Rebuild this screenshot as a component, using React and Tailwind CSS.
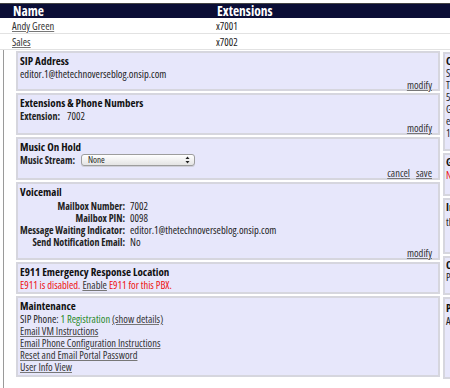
function Card({ h, children, right }) {
  return (
    <div
      className={`flex flex-col border-2 border-[#d6d6de] bg-[#e7e7fb] ${right ? 'pl-[1px] pr-[2px]' : 'px-[2px] pt-[1px]'} ${h}`}
    >
      {children}
    </div>
  );
}

function Title({ children }) {
  return <div className="text-[11px] font-bold leading-[13px] text-[#111]">{children}</div>;
}

function Link({ children }) {
  return <span className="cursor-pointer text-[#333] underline decoration-[#777] underline-offset-[1px]">{children}</span>;
}

function Bottom({ children }) {
  return <div className="mt-auto flex justify-end gap-[6px] pr-[4px] leading-[10px]">{children}</div>;
}

function Label({ children, className = '' }) {
  return <span className={`text-[10px] font-bold ${className}`}>{children}</span>;
}

export default function App() {
  return (
    <div className="h-[388px] w-[450px] overflow-hidden bg-white pt-[3px] font-['Open_Sans',sans-serif] text-[10.5px] leading-[12px] text-[#222] font-stretch-[80%]">
      <div className="flex h-[15px] items-center border-t border-[#444] bg-[#0b0e36] text-[13.5px] font-bold text-white">
        <div className="w-[217px] pl-[13px]">Name</div>
        <div>Extensions</div>
      </div>
      <div className="flex h-[16px] items-center border-b border-[#e2e2e2]">
        <div className="w-[216px] pl-[12px]">
          <Link>Andy Green</Link>
        </div>
        <div>x7001</div>
      </div>
      <div className="flex h-[16px] items-center border-b border-[#e2e2e2]">
        <div className="w-[216px] pl-[12px]">
          <Link>Sales</Link>
        </div>
        <div>x7002</div>
      </div>
      <div className="ml-[3px] flex gap-[3px] border-l border-[#9a9a9a] pb-[20px] pl-[12px] pt-[1px]">
        <div className="flex w-[424px] shrink-0 flex-col gap-[2px]">
          <Card h="h-[40px]">
            <Title>SIP Address</Title>
            <div className="mt-[1px]">editor.1@thetechnoverseblog.onsip.com</div>
            <Bottom>
              <Link>modify</Link>
            </Bottom>
          </Card>
          <Card h="h-[42px]">
            <Title>Extensions &amp; Phone Numbers</Title>
            <div className="mt-[1px] flex items-baseline gap-[7px]">
              <Label>Extension:</Label>
              <span>7002</span>
            </div>
            <Bottom>
              <Link>modify</Link>
            </Bottom>
          </Card>
          <Card h="h-[43px]">
            <Title>Music On Hold</Title>
            <div className="flex h-[14px] items-center">
              <Label>Music Stream:</Label>
              <div className="ml-[6px] flex h-[12px] w-[114px] items-center justify-between rounded-[3px] border border-[#9d9d9d] bg-gradient-to-b from-white to-[#e4e4e4] pl-[6px] pr-[4px] text-[9px] leading-[10px] shadow-[0_1px_0_#cfcfd8]">
                <span>None</span>
                <svg width="5" height="8" viewBox="0 0 5 8">
                  <path d="M0.5 3 L2.5 0.5 L4.5 3 Z" fill="#222" />
                  <path d="M0.5 5 L2.5 7.5 L4.5 5 Z" fill="#222" />
                </svg>
              </div>
            </div>
            <Bottom>
              <Link>cancel</Link>
              <Link>save</Link>
            </Bottom>
          </Card>
          <Card h="h-[78px]">
            <Title>Voicemail</Title>
            <div className="mt-[2px] grid grid-cols-[max-content_1fr] items-baseline gap-x-[5px]">
              <Label className="text-right">Mailbox Number:</Label>
              <span>7002</span>
              <Label className="text-right">Mailbox PIN:</Label>
              <span>0098</span>
              <Label className="text-right">Message Waiting Indicator:</Label>
              <span>editor.1@thetechnoverseblog.onsip.com</span>
              <Label className="text-right">Send Notification Email:</Label>
              <span>No</span>
            </div>
            <Bottom>
              <Link>modify</Link>
            </Bottom>
          </Card>
          <Card h="h-[32px]">
            <Title>E911 Emergency Response Location</Title>
            <div className="mt-[1px] text-[#ee1111]">
              E911 is disabled. <Link>Enable</Link> E911 for this PBX.
            </div>
          </Card>
          <Card h="h-[81px]">
            <Title>Maintenance</Title>
            <div className="mt-[1px]">
              SIP Phone: <span className="text-[#2b8a2b]">1 Registration</span> <Link>(show details)</Link>
            </div>
            <div>
              <Link>Email VM Instructions</Link>
            </div>
            <div>
              <Link>Email Phone Configuration Instructions</Link>
            </div>
            <div>
              <Link>Reset and Email Portal Password</Link>
            </div>
            <div>
              <Link>User Info View</Link>
            </div>
          </Card>
        </div>
        <div className="mt-[1px] flex w-[150px] shrink-0 flex-col gap-[2px]">
          <Card h="h-[99px]" right>
            <Title>Credentials</Title>
            <div>Settings for this user</div>
            <div>To configure a phone</div>
            <div>5 digit extension</div>
            <div>Gateway: sip.onsip.com</div>
            <div>editor.1</div>
            <div>1 device registered</div>
          </Card>
          <Card h="h-[43px]" right>
            <Title>Groups</Title>
            <div className="mt-[1px] text-[#ee1111]">No groups</div>
          </Card>
          <Card h="h-[56px]" right>
            <Title>Inbound</Title>
            <div className="mt-[3px]">this user</div>
          </Card>
          <Card h="h-[39px]" right>
            <Title>Outbound Caller ID</Title>
            <div>PBX default</div>
          </Card>
          <Card h="h-[82px]" right>
            <div className="pt-[2px]">
              <Title>Presence</Title>
            </div>
            <div className="mt-[1px]">Available</div>
          </Card>
        </div>
      </div>
    </div>
  );
}
